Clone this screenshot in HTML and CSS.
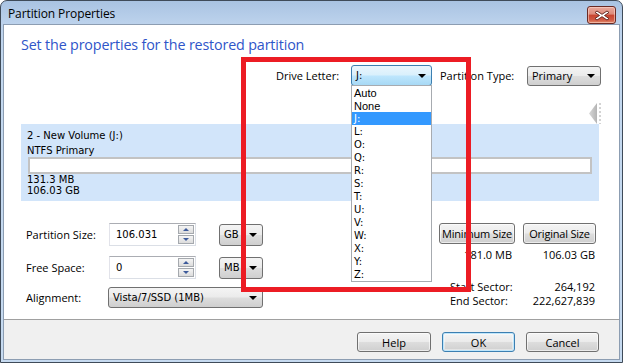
FILE: index.html
```html
<!DOCTYPE html>
<html>
<head>
<meta charset="utf-8">
<link rel="stylesheet" href="styles.css">
</head>
<body>
<div class="window">
  <div class="titlebar">
    <span class="title">Partition Properties</span>
    <div class="close-btn">
      <svg width="16" height="11" viewBox="0 0 16 11">
        <path d="M3 1 L8 4.3 L13 1 L15 2.5 L10.5 5.5 L15 8.5 L13 10 L8 6.7 L3 10 L1 8.5 L5.5 5.5 L1 2.5 Z" fill="#ffffff" stroke="#5a1e18" stroke-width="0.9" stroke-linejoin="round"/>
      </svg>
    </div>
  </div>
  <div class="client">
    <div class="main">
      <h1 class="heading">Set the properties for the restored partition</h1>

      <div class="drive-row">
        <span class="ui-label drive-label">Drive Letter:</span>
        <div class="combo-wrap">
          <div class="combo combo-focus drive-combo"><span class="combo-text pix">J:</span><i class="arrow"></i></div>
          <ul class="dropdown">
            <li class="ui-item">Auto</li>
            <li class="ui-item">None</li>
            <li class="sel">J:</li>
            <li>L:</li>
            <li>O:</li>
            <li>Q:</li>
            <li>R:</li>
            <li>S:</li>
            <li>T:</li>
            <li>U:</li>
            <li>V:</li>
            <li>W:</li>
            <li>X:</li>
            <li>Y:</li>
            <li>Z:</li>
          </ul>
        </div>
        <span class="ui-label type-label">Partition Type:</span>
        <div class="combo type-combo"><span class="combo-text ui">Primary</span><i class="arrow"></i></div>
      </div>

      <div class="map-nav">
        <svg width="12" height="21" viewBox="0 0 12 21">
          <defs>
            <linearGradient id="tri" x1="0" y1="0" x2="1" y2="0">
              <stop offset="0" stop-color="#d8d8d8"/>
              <stop offset="1" stop-color="#b4b4b4"/>
            </linearGradient>
          </defs>
          <path d="M8 0 L8 21 L0 10.5 Z" fill="url(#tri)"/>
          <line x1="11" y1="0" x2="11" y2="21" stroke="#a8a8a8" stroke-width="1" stroke-dasharray="2 2"/>
        </svg>
      </div>

      <div class="volume">
        <div class="vol-line">2 - New Volume (J:)</div>
        <div class="vol-line vol-line2">NTFS Primary</div>
        <div class="vol-bar"></div>
        <div class="vol-small">131.3 MB</div>
        <div class="vol-small">106.03 GB</div>
      </div>

      <div class="bottom">
        <div class="left-form">
          <div class="form-row row1">
            <span class="form-label">Partition Size:</span>
            <div class="spin-input"><span class="spin-value">106.031</span>
              <div class="spin-btns"><div class="spin up"><i></i></div><div class="spin down"><i></i></div></div>
            </div>
            <div class="combo unit-combo"><span class="combo-text pix">GB</span><i class="arrow"></i></div>
          </div>
          <div class="form-row row2">
            <span class="form-label">Free Space:</span>
            <div class="spin-input"><span class="spin-value">0</span>
              <div class="spin-btns"><div class="spin up"><i></i></div><div class="spin down"><i></i></div></div>
            </div>
            <div class="combo unit-combo"><span class="combo-text pix">MB</span><i class="arrow"></i></div>
          </div>
          <div class="form-row row3">
            <span class="form-label">Alignment:</span>
            <div class="combo align-combo"><span class="combo-text pix">Vista/7/SSD (1MB)</span><i class="arrow"></i></div>
          </div>
        </div>

        <div class="right-info">
          <div class="btn-row">
            <button class="btn btn-min">Minimum Size</button>
            <button class="btn btn-orig">Original Size</button>
          </div>
          <div class="val-row">
            <span class="val val-min">181.0 MB</span>
            <span class="val val-orig">106.03 GB</span>
          </div>
          <div class="sector-row sector-start"><span>Start Sector:</span><span>264,192</span></div>
          <div class="sector-row"><span>End Sector:</span><span>222,627,839</span></div>
        </div>
      </div>

      <div class="red-box"></div>
    </div>
    <div class="footer">
      <button class="btn foot-btn help-btn">Help</button>
      <button class="btn foot-btn ok-btn">OK</button>
      <button class="btn foot-btn">Cancel</button>
    </div>
  </div>
</div>
</body>
</html>
```

FILE: styles.css
```css
* { box-sizing: border-box; }
html, body { margin: 0; padding: 0; background: #ffffff; }

.window {
  width: 623px;
  height: 363px;
  border: 1px solid #3f4b59;
  border-radius: 7px 7px 0 0;
  padding: 0 2px 2px 2px;
  background: linear-gradient(to bottom, #a9c3e2 0px, #bcd2ec 22px, #c3d8ef 60px, #c6daf0 100%);
  display: flex;
  flex-direction: column;
  overflow: hidden;
}

.titlebar {
  height: 23px;
  flex: none;
  display: flex;
  align-items: center;
  justify-content: space-between;
  padding-left: 5px;
  padding-right: 4px;
}
.title {
  font-family: "Open Sans", sans-serif;
  font-size: 12px;
  color: #000;
  letter-spacing: -0.1px;
  margin-top: 2px;
}
.close-btn {
  width: 29px;
  height: 18px;
  margin-top: 5px;
  border: 1px solid #6a2a24;
  border-radius: 3px;
  background: linear-gradient(to bottom, #e9a99c 0%, #dd8a7a 45%, #c8442f 50%, #cf5a44 80%, #e38b6b 100%);
  box-shadow: inset 0 0 0 1px rgba(255,220,210,0.55);
  display: flex;
  align-items: center;
  justify-content: center;
}

.client {
  flex: 1;
  border: 1px solid #8c9db2;
  background: #ffffff;
  display: flex;
  flex-direction: column;
}
.main {
  height: 294px;
  flex: none;
  position: relative;
}

.heading {
  margin: 9px 0 0 17px;
  height: 21px;
  font-family: "Open Sans", sans-serif;
  font-weight: normal;
  font-size: 14.3px;
  line-height: 21px;
  color: #2f55c9;
  letter-spacing: -0.15px;
}

.drive-row {
  margin-top: 10px;
  height: 21px;
  display: flex;
  align-items: center;
  padding-left: 272px;
}
.ui-label {
  font-family: "Open Sans", sans-serif;
  font-size: 11px;
  color: #000;
  white-space: nowrap;
}
.drive-label { width: 75px; }
.combo-wrap { position: relative; }
.type-label { margin-left: 8px; width: 87px; }

.combo {
  position: relative;
  height: 21px;
  border: 1px solid #707070;
  border-radius: 3px;
  background: linear-gradient(to bottom, #f4f4f4 0%, #ebebeb 48%, #dddddd 52%, #cfcfcf 100%);
  display: flex;
  align-items: center;
  padding-left: 4px;
}
.combo-focus {
  border-color: #3c7fb1;
  background: linear-gradient(to bottom, #eaf6fd 0%, #d9f0fc 48%, #bee6fd 52%, #a7d9f5 100%);
}
.drive-combo { width: 81px; }
.type-combo { width: 74px; height: 20px; }
.combo-text {
  color: #000;
  white-space: nowrap;
}
.pix {
  font-family: "DejaVu Sans", sans-serif;
  font-size: 10px;
}
.ui {
  font-family: "Open Sans", sans-serif;
  font-size: 11px;
}
.arrow {
  position: absolute;
  right: 5px;
  top: 50%;
  margin-top: -2px;
  width: 0;
  height: 0;
  border-left: 4px solid transparent;
  border-right: 4px solid transparent;
  border-top: 4px solid #000;
}

.dropdown {
  position: absolute;
  left: 0;
  top: 20px;
  width: 81px;
  margin: 0;
  padding: 0;
  list-style: none;
  background: #ffffff;
  border: 1px solid #a7abb0;
  z-index: 5;
}
.dropdown li {
  height: 13px;
  line-height: 13px;
  padding-left: 2px;
  font-family: "DejaVu Sans", sans-serif;
  font-size: 10px;
  color: #000;
  overflow: hidden;
}
.dropdown li.ui-item {
  font-family: "Liberation Sans", sans-serif;
  font-size: 11px;
  line-height: 14px;
}
.dropdown li.sel {
  background: #3399ff;
  color: #ffffff;
}

.map-nav {
  margin-top: 16px;
  height: 22px;
  display: flex;
  justify-content: flex-end;
  padding-right: 18px;
  padding-top: 1px;
}

.volume {
  margin-left: 17px;
  width: 578px;
  height: 77px;
  background: #d2e5fa;
  padding: 5px 7px 4px 6px;
  font-family: "DejaVu Sans", sans-serif;
  font-size: 10px;
  color: #000;
}
.vol-line { height: 13px; line-height: 13px; }
.vol-line2 { margin-top: 2px; }
.vol-bar {
  height: 17px;
  background: #ffffff;
  border: 2px solid #c3c3c3;
  margin: 0 0 0 1px;
}
.vol-small { height: 11px; line-height: 12px; }

.bottom {
  margin-top: 22px;
  display: flex;
  justify-content: space-between;
  padding-left: 22px;
  padding-right: 23px;
}
.left-form { display: flex; flex-direction: column; }
.form-row { display: flex; align-items: center; height: 23px; }
.row2 { margin-top: 10px; }
.row3 { margin-top: 8px; height: 21px; }
.form-label {
  width: 83px;
  font-family: "Open Sans", sans-serif;
  font-size: 11px;
  color: #000;
}
.spin-input {
  width: 87px;
  height: 23px;
  border: 1px solid #dbdfe6;
  border-top-color: #abadb3;
  border-left-color: #e2e3ea;
  display: flex;
  align-items: center;
  justify-content: space-between;
  padding-left: 6px;
  padding-right: 1px;
  background: #fff;
}
.spin-value {
  font-family: "DejaVu Sans", sans-serif;
  font-size: 10px;
  color: #000;
}
.spin-btns { display: flex; flex-direction: column; gap: 1px; }
.spin {
  width: 16px;
  height: 9px;
  border: 1px solid #a5a9ae;
  background: linear-gradient(to bottom, #f4f4f4, #dcdcdc);
  display: flex;
  align-items: center;
  justify-content: center;
}
.spin i {
  width: 0; height: 0;
  border-left: 3px solid transparent;
  border-right: 3px solid transparent;
}
.spin.up i { border-bottom: 3px solid #3d5a9a; }
.spin.down i { border-top: 3px solid #3d5a9a; }
.unit-combo { width: 44px; height: 22px; margin-left: 23px; }
.align-combo { width: 155px; margin-left: -1px; }

.right-info { display: flex; flex-direction: column; width: 157px; }
.btn {
  height: 21px;
  border: 1px solid #707070;
  border-radius: 3px;
  background: linear-gradient(to bottom, #f4f4f4 0%, #ebebeb 48%, #dddddd 52%, #cfcfcf 100%);
  box-shadow: inset 0 0 0 1px rgba(255,255,255,0.6);
  font-family: "Open Sans", sans-serif;
  font-size: 11px;
  color: #000;
  padding: 0;
  line-height: 18px;
  white-space: nowrap;
  overflow: hidden;
}
.btn-row { display: flex; gap: 8px; }
.btn-min { width: 76px; letter-spacing: -0.2px; }
.btn-orig { width: 73px; letter-spacing: -0.2px; }
.val-row {
  margin-top: 4px;
  display: flex;
  gap: 8px;
  height: 13px;
  line-height: 13px;
}
.val {
  font-family: "Open Sans", sans-serif;
  font-size: 11px;
  text-align: right;
  color: #000;
  white-space: nowrap;
}
.val-min { width: 76px; padding-right: 3px; }
.val-orig { width: 73px; padding-right: 1px; }
.sector-row {
  display: flex;
  justify-content: space-between;
  padding-left: 11px;
  padding-right: 1px;
  height: 14px;
  line-height: 14px;
  font-family: "Open Sans", sans-serif;
  font-size: 11px;
  color: #000;
}
.sector-start { margin-top: 19px; }

.red-box {
  position: absolute;
  left: 237px;
  top: 32px;
  width: 230px;
  height: 235px;
  border: 5px solid #ec1c24;
  z-index: 10;
}

.footer {
  height: 40px;
  flex: none;
  background: #f0f0f0;
  border-top: 1px solid #a0a0a0;
  display: flex;
  justify-content: flex-end;
  align-items: flex-start;
  gap: 11px;
  padding-top: 12px;
  padding-right: 20px;
}
.foot-btn { width: 73px; height: 20px; line-height: 17px; }
.help-btn { width: 74px; }
.ok-btn {
  border-color: #3c7fb1;
  box-shadow: inset 0 0 0 1px #bfe6fb, inset 0 0 0 2px rgba(255,255,255,0.4);
}
```
